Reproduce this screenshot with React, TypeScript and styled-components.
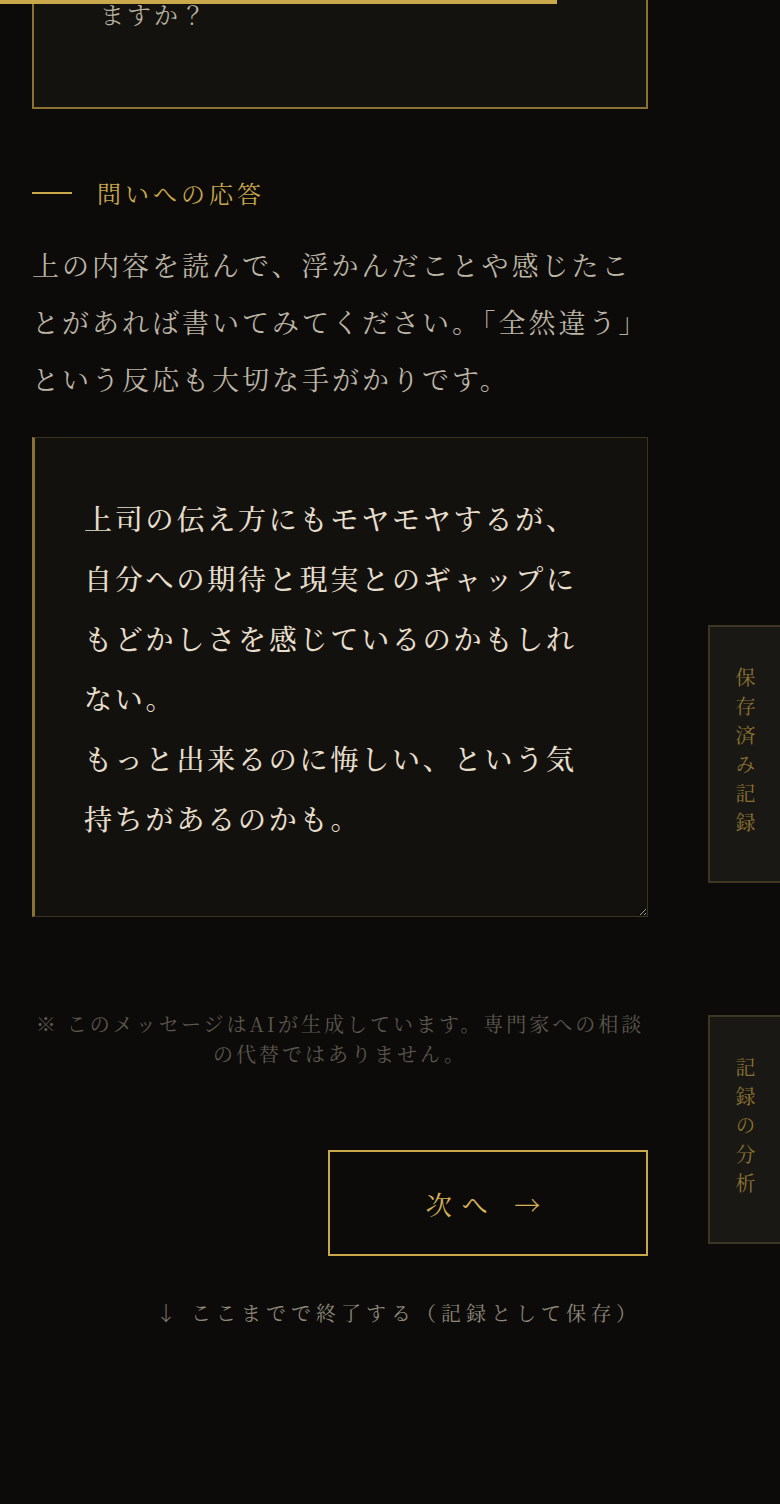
import React from 'react';
import styled, { createGlobalStyle } from 'styled-components';

const GlobalStyle = createGlobalStyle`
  html, body {
    margin: 0;
    padding: 0;
    background: #0c0b0a;
  }
  body {
    font-family: "Noto Serif CJK JP", "Noto Serif JP", "Liberation Serif", serif;
    color: #bdb5a6;
    overflow: hidden;
  }
`;

const Progress = styled.div<{ $ratio: number }>`
  position: fixed;
  top: 0;
  left: 0;
  height: 4px;
  width: ${(p) => p.$ratio * 100}%;
  background: #c9a84c;
  z-index: 5;
`;

const Page = styled.main`
  width: 616px;
  margin-left: 32px;
  display: flex;
  flex-direction: column;
  padding-bottom: 160px;
`;

// the page is scrolled: only the end of the question card shows
const QuestionCard = styled.section`
  margin-top: -60px;
  border: 2px solid #8a7233;
  background: #13120e;
  padding: 50px 66px 72px;
  font-size: 24px;
  line-height: 43px;
  letter-spacing: 3px;
  color: #b8b0a0;
`;

const SectionTitle = styled.h2`
  margin: 66px 0 0;
  display: flex;
  align-items: center;
  gap: 25px;
  font-size: 24px;
  line-height: 36px;
  font-weight: 400;
  letter-spacing: 4px;
  color: #c9a84c;

  &::before {
    content: '';
    width: 40px;
    height: 2px;
    background: #c9a84c;
  }
`;

const Lead = styled.p`
  margin: 25px 0 0;
  font-size: 27px;
  line-height: 57px;
  letter-spacing: 3px;
  color: #bdb5a6;
`;

const Answer = styled.textarea`
  display: block;
  box-sizing: border-box;
  margin-top: 30px;
  width: 616px;
  height: 480px;
  padding: 50px 48px 40px 49px;
  border: 1px solid #3c3421;
  border-left: 3px solid #8a7233;
  background: #12110e;
  color: #e6ddcb;
  font-family: inherit;
  font-size: 28px;
  font-weight: 500;
  line-height: 60px;
  letter-spacing: 2.8px;
  outline: none;
  resize: vertical;
`;

const Notice = styled.p`
  margin: 92px 0 0;
  text-align: center;
  font-size: 20px;
  line-height: 30px;
  letter-spacing: 3px;
  color: #5c574e;
`;

const Actions = styled.div`
  margin-top: 81px;
  display: flex;
  flex-direction: column;
  align-items: flex-end;
  gap: 42px;
`;

const NextButton = styled.button`
  box-sizing: border-box;
  width: 320px;
  height: 106px;
  border: 2px solid #c9a84c;
  background: transparent;
  color: #d4b25a;
  font-family: inherit;
  font-size: 26px;
  letter-spacing: 10px;
  cursor: pointer;
`;

const FinishLink = styled.a`
  margin-right: 7px;
  font-size: 20px;
  line-height: 30px;
  letter-spacing: 5px;
  color: #8f887b;
  text-decoration: none;
`;

const SideTab = styled.button<{ $top: number }>`
  position: fixed;
  top: ${(p) => p.$top}px;
  right: -2px;
  width: 74px;
  box-sizing: border-box;
  padding: 40px 0;
  border: 2px solid #3d3624;
  background: #1a1814;
  color: #8a7233;
  font-family: inherit;
  font-size: 20px;
  line-height: 1;
  letter-spacing: 9px;
  writing-mode: vertical-rl;
  display: flex;
  align-items: center;
  justify-content: center;
  cursor: pointer;
`;

const answerText =
  '上司の伝え方にもモヤモヤするが、自分への期待と現実とのギャップにもどかしさを感じているのかもしれない。\nもっと出来るのに悔しい、という気持ちがあるのかも。';

export default function App() {
  return (
    <>
      <GlobalStyle />
      <Progress $ratio={557 / 780} />
      <Page>
        <QuestionCard>ますか？</QuestionCard>
        <SectionTitle>問いへの応答</SectionTitle>
        <Lead>
          上の内容を読んで、浮かんだことや感じたことがあれば書いてみてください。「全然違う」という反応も大切な手がかりです。
        </Lead>
        <Answer defaultValue={answerText} />
        <Notice>
          ※ このメッセージはAIが生成しています。専門家への相談の代替ではありません。
        </Notice>
        <Actions>
          <NextButton>次へ →</NextButton>
          <FinishLink href="#">↓ ここまでで終了する（記録として保存）</FinishLink>
        </Actions>
      </Page>
      <SideTab $top={625}>保存済み記録</SideTab>
      <SideTab $top={1015}>記録の分析</SideTab>
    </>
  );
}
